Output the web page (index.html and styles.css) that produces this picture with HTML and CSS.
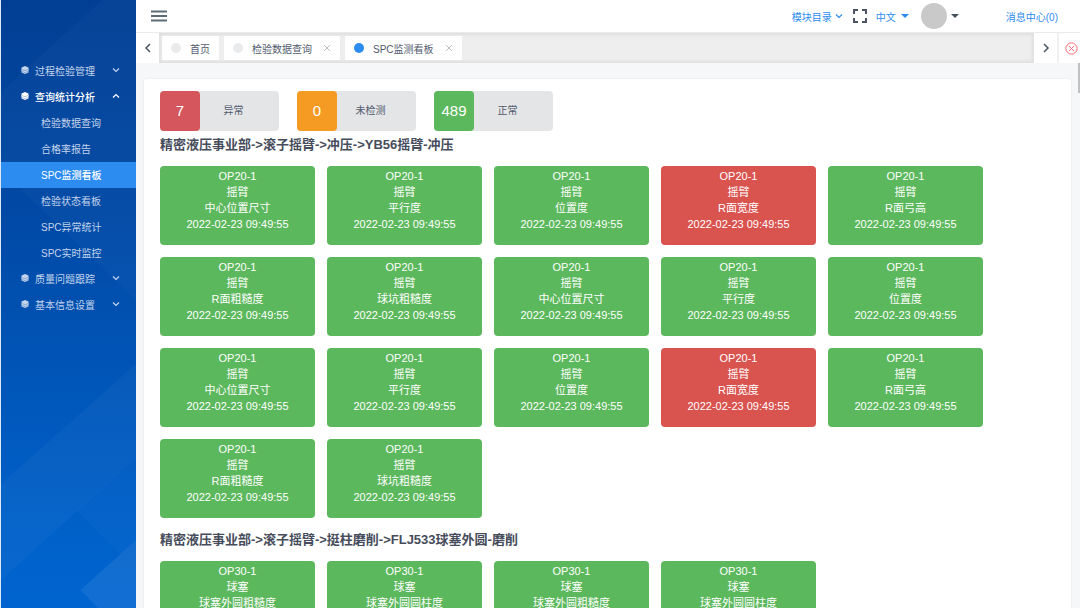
FILE: index.html
```html
<!DOCTYPE html>
<html lang="zh-CN">
  <head>
    <meta charset="utf-8">
    <title>SPC监测看板</title>
    <link rel="stylesheet" href="styles.css">
  </head>
  <body>
    <svg class="symbols" aria-hidden="true">
      <symbol id="layers" viewBox="0 0 16 16">
        <path d="M8 0 15 3v3l1 2-1 1v4l-7 3-7-3V9L0 8l1-2V3z" fill="currentColor"/>
        <path d="M1 6.500 8 9.500l7-3M1 10.500l7 3 7-3" fill="none" stroke="#0a4aa6" stroke-opacity=".6" stroke-width="1"/>
      </symbol>
      <symbol id="down" viewBox="0 0 8 8">
        <path d="M1 2.500 4 5.500 7 2.500" fill="none" stroke="currentColor" stroke-width="1.200"/>
      </symbol>
      <symbol id="close" viewBox="0 0 8 8">
        <path d="M1 1 7 7M7 1 1 7" fill="none" stroke="currentColor"/>
      </symbol>
    </svg>

    <aside class="sidebar">
      <svg class="sidebar-bg" viewBox="0 0 136 608" preserveAspectRatio="none" aria-hidden="true">
        <path d="M0 92 102 0H136V300L0 170z" fill="#fff" fill-opacity=".025"/>
        <path d="M0 484 136 364V458L0 580z" fill="#fff" fill-opacity=".03"/>
        <path d="M76 510 136 458V540L120 554z" fill="#fff" fill-opacity=".02"/>
        <path d="M80 590 136 540V608H98z" fill="#fff" fill-opacity=".07"/>
      </svg>
      <nav class="menu">
        <a href="#" class="item"><svg class="layer"><use href="#layers"/></svg>过程检验管理<svg class="arrow"><use href="#down"/></svg></a>
        <a href="#" class="item open"><svg class="layer"><use href="#layers"/></svg>查询统计分析<svg class="arrow"><use href="#down"/></svg></a>
        <a href="#" class="sub">检验数据查询</a>
        <a href="#" class="sub">合格率报告</a>
        <a href="#" class="sub active">SPC监测看板</a>
        <a href="#" class="sub">检验状态看板</a>
        <a href="#" class="sub">SPC异常统计</a>
        <a href="#" class="sub">SPC实时监控</a>
        <a href="#" class="item"><svg class="layer"><use href="#layers"/></svg>质量问题跟踪<svg class="arrow"><use href="#down"/></svg></a>
        <a href="#" class="item"><svg class="layer"><use href="#layers"/></svg>基本信息设置<svg class="arrow"><use href="#down"/></svg></a>
      </nav>
    </aside>

    <div class="main">
      <header class="header">
        <button type="button" class="burger" aria-label="菜单">
          <svg width="16" height="12" viewBox="0 0 16 12"><path d="M0 1.500h16M0 6h16M0 10.500h16" stroke="#5d6b76" stroke-width="1.800"/></svg>
        </button>
        <div class="tools">
          <a href="#" class="catalog">模块目录<svg class="arrow"><use href="#down"/></svg></a>
          <button type="button" class="full" aria-label="全屏">
            <svg width="14" height="14" viewBox="0 0 14 14"><path d="M1 5V1h4M9 1h4v4M13 9v4H9M5 13H1V9" fill="none" stroke="#4a5561" stroke-width="2"/></svg>
          </button>
          <a href="#" class="lang">中文<i class="caret"></i></a>
          <button type="button" class="user" aria-label="用户"><span class="avatar"></span><i class="caret"></i></button>
          <a href="#" class="message">消息中心(0)</a>
        </div>
      </header>

      <div class="tabs">
        <button type="button" class="side" aria-label="向左"><svg width="8" height="10" viewBox="0 0 8 10"><path d="M6 1 2 5l4 4" fill="none" stroke="#4a5561" stroke-width="1.500"/></svg></button>
        <div class="track">
          <a href="#" class="tab"><i class="dot"></i>首页</a>
          <a href="#" class="tab"><i class="dot"></i>检验数据查询<svg class="x"><use href="#close"/></svg></a>
          <a href="#" class="tab current"><i class="dot"></i>SPC监测看板<svg class="x"><use href="#close"/></svg></a>
        </div>
        <button type="button" class="side" aria-label="向右"><svg width="8" height="10" viewBox="0 0 8 10"><path d="M2 1 6 5 2 9" fill="none" stroke="#4a5561" stroke-width="1.500"/></svg></button>
        <button type="button" class="side clear" aria-label="关闭"><svg width="13" height="13" viewBox="0 0 13 13"><path d="M4 4l5 5M9 4 4 9" stroke="#ff6b70"/><circle cx="6.500" cy="6.500" r="5.600" fill="none" stroke="#ff6b70"/></svg></button>
      </div>

      <div class="content">
        <main class="panel">
          <div class="stats">
            <div class="stat"><b class="bad">7</b><span>异常</span></div>
            <div class="stat"><b class="wait">0</b><span>未检测</span></div>
            <div class="stat"><b class="good">489</b><span>正常</span></div>
          </div>
          <div id="board"></div>
        </main>
        <i class="thumb"></i>
      </div>
    </div>

    <script>
      var time = "2022-02-23 09:49:55";

      var groups = [
        {
          "title": "精密液压事业部->滚子摇臂->冲压->YB56摇臂-冲压",
          "op": "OP20-1",
          "part": "摇臂",
          "items": ["中心位置尺寸", "平行度", "位置度", "R面宽度", "R面弓高",
                    "R面粗糙度", "球坑粗糙度", "中心位置尺寸", "平行度", "位置度",
                    "中心位置尺寸", "平行度", "位置度", "R面宽度", "R面弓高",
                    "R面粗糙度", "球坑粗糙度"],
          "alarm": [3, 13]
        },
        {
          "title": "精密液压事业部->滚子摇臂->挺柱磨削->FLJ533球塞外圆-磨削",
          "op": "OP30-1",
          "part": "球塞",
          "items": ["球塞外圆粗糙度", "球塞外圆圆柱度", "球塞外圆粗糙度", "球塞外圆圆柱度"],
          "alarm": []
        }
      ];

      function showBoard() {
        var html = "";
        for (var i = 0; i < groups.length; i++) {
          var g = groups[i];
          html += '<h2 class="title">' + g.title.replace(/>/g, "&gt;") + '</h2><div class="cards">';
          for (var j = 0; j < g.items.length; j++) {
            var state = g.alarm.indexOf(j) >= 0 ? "card alarm" : "card";
            html += '<div class="' + state + '"><div>' + g.op + '</div><div>' + g.part +
              '</div><div>' + g.items[j] + '</div><div>' + time + '</div></div>';
          }
          html += '</div>';
        }
        document.getElementById("board").innerHTML = html;
      }

      showBoard();
    </script>
  </body>
</html>
```
FILE: styles.css
```css
* {
  box-sizing: border-box;
}
body {
  margin: 0;
  display: flex;
  height: 100vh;
  overflow: hidden;
  font-family: "Liberation Sans", "Noto Sans CJK SC", sans-serif;
  font-size: 10px;
  color: #515a6e;
  background: #f5f7f9;
}
a {
  color: inherit;
  text-decoration: none;
}
button {
  padding: 0;
  border: 0;
  background: none;
  font: inherit;
  cursor: pointer;
}
.symbols {
  display: none;
}

/* sidebar */
.sidebar {
  position: relative;
  flex: none;
  width: 136px;
  padding-top: 58px;
  border-left: 1px solid #dfe9f6;
  background: linear-gradient(#023f94, #0149a5 35%, #0060c8 85%, #0064d0);
}
.sidebar-bg {
  position: absolute;
  left: 0;
  top: 0;
  width: 100%;
  height: 100%;
}
.menu {
  position: relative;
  display: flex;
  flex-direction: column;
  color: #c3d4ec;
}
.item,
.sub {
  display: flex;
  align-items: center;
  height: 26px;
  padding-bottom: 2px;
}
.item {
  padding-left: 20px;
  padding-right: 16px;
}
.sub {
  padding-left: 40px;
}
.item.open,
.sub.active {
  color: #fff;
  font-weight: 500;
}
.sub.active {
  background: #2d8cf0;
}
.layer {
  width: 8px;
  height: 8px;
  margin-right: 6px;
}
.arrow {
  width: 8px;
  height: 8px;
}
.item .arrow {
  margin-left: auto;
}
.open .arrow {
  transform: rotate(180deg);
}

/* top bar */
.main {
  flex: 1;
  min-width: 0;
  display: flex;
  flex-direction: column;
}
.header {
  flex: none;
  display: flex;
  align-items: center;
  justify-content: space-between;
  height: 32px;
  padding: 0 22px 0 15px;
  background: #fff;
}
.burger,
.full {
  display: flex;
}
.tools {
  display: flex;
  align-items: center;
  color: #2d8cf0;
}
.catalog,
.lang,
.user {
  display: flex;
  align-items: center;
}
.catalog {
  gap: 3px;
  margin-right: 10px;
}
.full {
  margin-right: 9px;
}
.lang {
  gap: 5px;
  margin-right: 12px;
}
.user {
  gap: 4px;
  margin-right: 47px;
  color: #46505c;
}
.caret {
  border: 4px solid transparent;
  border-top-color: currentColor;
  border-bottom: 0;
}
.avatar {
  width: 26px;
  height: 26px;
  border-radius: 50%;
  background: #c9c9c9;
}

/* tabs */
.tabs {
  flex: none;
  display: flex;
  height: 31px;
  background: #fff;
  border-top: 1px solid #ebebeb;
}
.side {
  display: flex;
  align-items: center;
  justify-content: center;
  width: 23px;
}
.side.clear {
  padding-left: 3px;
  border-left: 2px solid #f0f0f0;
}
.track {
  flex: 1;
  display: flex;
  align-items: center;
  gap: 5px;
  padding: 0 3px;
  background: #eee;
  box-shadow: inset 0 0 3px 2px rgba(100, 100, 100, .1);
}
.tab {
  display: flex;
  align-items: center;
  height: 24px;
  padding: 0 9px;
  background: #fff;
}
.dot {
  width: 10px;
  height: 10px;
  margin-right: 9px;
  border-radius: 50%;
  background: #e8eaec;
}
.current .dot {
  background: #2d8cf0;
}
.x {
  width: 8px;
  height: 8px;
  margin-left: 11px;
  color: #b8bcc4;
}

/* board */
.content {
  position: relative;
  flex: 1;
  min-height: 0;
  padding: 16px 9px 0 8px;
  overflow: hidden;
}
.thumb {
  position: absolute;
  top: 0;
  right: 0;
  width: 2px;
  height: 30px;
  background: #c1c1c1;
}
.panel {
  padding: 12px 16px;
  border-radius: 3px;
  background: #fff;
  box-shadow: 0 0 1px 1px #eef0f2;
}
.stats {
  display: flex;
  gap: 18px;
  margin-bottom: 4px;
}
.stat {
  display: flex;
  width: 119px;
  height: 40px;
  border-radius: 4px;
  background: #e3e5e7;
  line-height: 40px;
  text-align: center;
}
.stat b {
  width: 40px;
  border-radius: 4px;
  font-size: 15px;
  font-weight: 400;
  color: #fff;
}
.stat span {
  flex: 1;
  padding-right: 12px;
}
.bad {
  background: #d5565c;
}
.wait {
  background: #f59a23;
}
.good {
  background: #5cb85c;
}
.title {
  margin: 0;
  font-size: 13px;
  line-height: 19px;
  color: #464c5b;
}
.cards {
  display: grid;
  grid-template-columns: repeat(auto-fill, 155px);
  gap: 12px;
  margin: 12px 0;
}
.card {
  height: 79px;
  padding-top: 2px;
  border-radius: 4px;
  background: #5cb85c;
  font-size: 11px;
  line-height: 16px;
  text-align: center;
  color: #fff;
}
.alarm {
  background: #d9534f;
}
```
